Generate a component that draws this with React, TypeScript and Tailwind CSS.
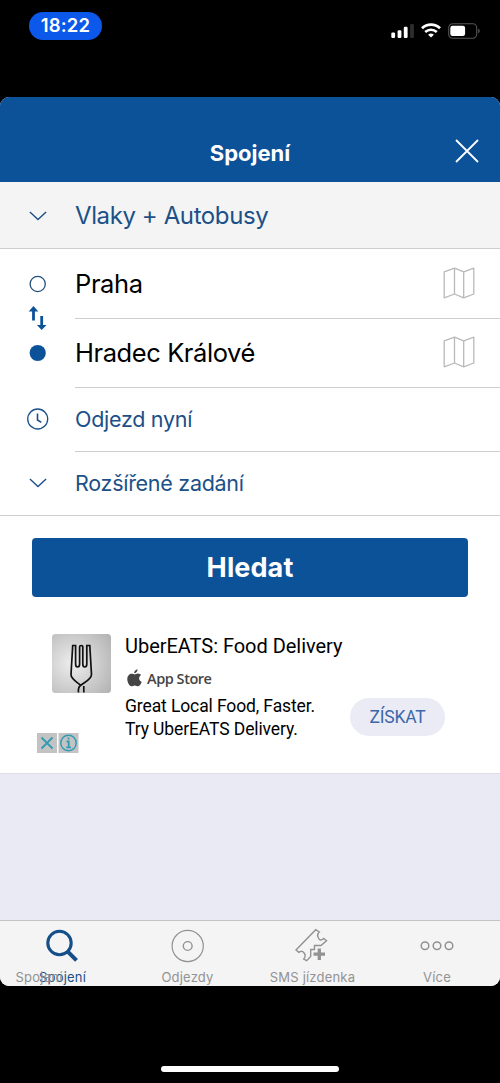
import React from 'react';

const StatusBar: React.FC = () => (
  <div className="h-[97px] shrink-0 flex items-start justify-between pl-[29px] pr-[20px] pt-3">
    <div className="w-[73px] h-[28px] rounded-full bg-[#0b58ea] flex items-center justify-center text-white text-[18.5px] font-semibold tracking-[0.2px]">
      18:22
    </div>
    <svg className="mt-[10px]" width="90" height="18" viewBox="0 0 90 18" fill="none">
      <rect x="1.3" y="10.6" width="3.8" height="5.4" rx="1.2" fill="#fff" />
      <rect x="7.6" y="8.2" width="3.8" height="7.8" rx="1.2" fill="#fff" />
      <rect x="13.8" y="4.8" width="3.8" height="11.2" rx="1.2" fill="#fff" />
      <rect x="20.1" y="2" width="3.8" height="14" rx="1.2" fill="#2d2d2d" />
      <path d="M32 6.2A13.2 13.2 0 0 1 50 6.2" stroke="#fff" strokeWidth="2.8" />
      <path d="M35.2 10A8.6 8.6 0 0 1 46.8 10" stroke="#fff" strokeWidth="2.5" />
      <path d="M41 15.6L38.1 12.7A4.4 4.4 0 0 1 43.9 12.7Z" fill="#fff" />
      <rect x="58.7" y="1.8" width="28" height="14.4" rx="4" stroke="#555" strokeWidth="1.1" />
      <rect x="60.3" y="3.8" width="14.8" height="10.2" rx="2.2" fill="#fff" />
      <path d="M88.2 6.6C90.2 7.6 90.2 10.4 88.2 11.4Z" fill="#555" />
    </svg>
  </div>
);

const ChevronIcon = () => (
  <svg width="18" height="10" viewBox="0 0 18 10" fill="none" stroke="#1b5088" strokeWidth="1.4">
    <path d="M.9.9L9 8.6L17.1.9" />
  </svg>
);

const MapIcon = () => (
  <svg className="mb-[2px]" width="32" height="32" viewBox="0 0 32 32" fill="none" stroke="#b9b9b9" strokeWidth="1.3" strokeLinejoin="round">
    <path d="M1.2 4.8L11.5 1.2L20.7 4.8L30.8 1.2V27L20.7 30.8L11.5 27L1.2 30.8Z" />
    <path d="M11.5 1.2V27M20.7 4.8V30.8" />
  </svg>
);

const SearchForm: React.FC = () => (
  <div>
    <div className="h-[67px] bg-[#f4f4f4] border-b border-[#cecece] flex items-center text-[#1b5088] pt-[2px]">
      <div className="w-[75px] flex justify-center"><ChevronIcon /></div>
      <span className="text-[24px] tracking-[-0.4px]">Vlaky + Autobusy</span>
    </div>

    <div className="flex border-b border-[#cecece]">
      <div className="w-[75px] shrink-0 flex flex-col items-center">
        <svg className="mt-[25px]" width="22" height="92" viewBox="0 0 22 92">
          <circle cx="10.7" cy="10" r="7.6" fill="none" stroke="#234f7b" strokeWidth="1.3" />
          <g stroke="#0c5299" strokeWidth="2.8">
            <path d="M6.5 35V46.5M14.7 42V53" />
          </g>
          <path d="M6.5 32L11.3 37.5H1.7ZM14.7 56L19.5 51H9.9Z" fill="#0c5299" />
          <circle cx="10.7" cy="79" r="8.1" fill="#0c5299" />
        </svg>
        <svg className="mt-[42px]" width="22" height="22" viewBox="0 0 22 22" fill="none" stroke="#1b5088" strokeWidth="1.3">
          <circle cx="10.7" cy="11" r="10" />
          <path d="M10.5 5.4V12L14.3 14.4" strokeWidth="1.6" />
        </svg>
        <div className="mt-[48px]"><ChevronIcon /></div>
      </div>
      <div className="flex-1">
        <div className="h-[70px] border-b border-[#cecece] flex items-center justify-between pr-[25px] text-[25.5px] tracking-[-0.4px] text-black">
          <span className="pt-[2px]">Praha</span>
          <MapIcon />
        </div>
        <div className="h-[69px] border-b border-[#cecece] flex items-center justify-between pr-[25px] text-[25.5px] tracking-[-0.42px] text-black">
          <span>Hradec Králové</span>
          <MapIcon />
        </div>
        <div className="h-[64px] border-b border-[#cecece] flex items-center text-[21.5px] tracking-[-0.28px] text-[#1b5088]">Odjezd nyní</div>
        <div className="h-[63px] flex items-center text-[21.5px] tracking-[-0.28px] text-[#1b5088]">Rozšířené zadání</div>
      </div>
    </div>

    <div className="px-8 pt-[22px]">
      <button className="w-full h-[59px] rounded-[4px] bg-[#0c5299] text-white text-[27px] font-bold tracking-[0.1px] pt-px">
        Hledat
      </button>
    </div>
  </div>
);

const AdBanner: React.FC = () => (
  <div className="font-['Roboto',sans-serif] h-[177px] pt-[22px] px-[37px] border-b border-[#dedee4] text-black">
    <div className="h-[134px] flex relative">
      <svg className="ml-[15px] mt-[15px]" width="59" height="59" viewBox="0 0 59 59" fill="none">
        <defs>
          <radialGradient id="tile" cx=".35" cy=".5" r=".8">
            <stop offset="0" stopColor="#eeeeee" />
            <stop offset="1" stopColor="#b2b2b2" />
          </radialGradient>
        </defs>
        <rect width="59" height="59" rx="3.5" fill="url(#tile)" />
        <path
          d="M28.8 51.3C24 47.5 19 45 19 40.5L20.7 11.5H23.6V30C23.6 34 27.6 34 27.6 30V13Q27.6 11.5 29.2 11.5T30.8 13V30C30.8 34 34.8 34 34.8 30V11.5H37.8L39.5 40.5C39.5 45 34 47.5 28.8 51.3C27 52.5 26 55 26.5 58.5M31.8 52V58.5"
          stroke="#111"
          strokeWidth="1.7"
        />
      </svg>
      <div className="ml-[14px] pt-[15px] whitespace-nowrap">
        <div className="text-[20px] leading-[24px] tracking-[-0.03px]">UberEATS: Food Delivery</div>
        <div className="h-[37px] flex items-center pt-1 gap-[5px]">
          <svg className="ml-[2px] mb-[2px]" width="15" height="18" viewBox="0 0 15 18" fill="#454545">
            <path d="M10.5.2C10.7 2.4 9 4.3 7.2 4.3C7 2.2 8.6.5 10.5.2ZM7.6 5.4C8.4 5.4 9.5 4.5 10.9 4.5C12.4 4.5 13.5 5.3 14.1 6.1C11.2 7.8 11.7 11.8 14.7 13C14.1 14.5 12.8 17.2 11.1 17.2C9.8 17.2 9.3 16.4 7.7 16.4C6.1 16.4 5.6 17.2 4.4 17.2C2.2 17.2.3 13.2.3 10.1C.3 6.6 2.6 4.7 4.7 4.7C6.1 4.7 6.9 5.4 7.6 5.4Z" />
          </svg>
          <span className="font-['Open_Sans',sans-serif] font-semibold text-[14.5px] text-[#454545] tracking-[-0.45px]">App Store</span>
        </div>
        <div className="text-[17.5px] leading-[22.5px] tracking-[-0.11px]">Great Local Food, Faster.<br />Try UberEATS Delivery.</div>
      </div>
      <button className="absolute right-[18px] top-[79px] w-[95px] h-[38px] rounded-full bg-[#ebebf5] text-[#3b68ab] text-[17.5px] tracking-[-0.2px]">
        ZÍSKAT
      </button>
      <svg className="absolute left-0 bottom-0" width="42" height="20" viewBox="0 0 42 20" fill="none" stroke="#329bb3" strokeWidth="1.8">
        <path d="M0 0H20V20H0ZM21.5 0H41.5V20H21.5Z" fill="#c3c3c3" stroke="none" />
        <path d="M4.5 4.5L15.5 15.5M15.5 4.5L4.5 15.5" />
        <circle cx="31.5" cy="10" r="7.7" strokeWidth="1.5" />
        <path d="M29.5 8.5H31.7V14M29.3 14.3H34M31.5 4.5V6.6" />
      </svg>
    </div>
  </div>
);

const TabBar: React.FC = () => (
  <div className="h-[66px] grid grid-cols-4 bg-[#f4f4f4] border-t border-[#c3c3c8] text-[13px] leading-[16px] tracking-[0.2px] text-[#929292]">
    <div className="flex flex-col items-center relative text-[#1b5088]">
      <svg className="mt-[8px] mr-[2px]" width="34" height="34" viewBox="0 0 34 34" fill="none" stroke="#154e88">
        <circle cx="14.5" cy="14" r="11.7" strokeWidth="3.1" />
        <path d="M22.5 22.3L31.5 31.3" strokeWidth="4" />
      </svg>
      <span className="mt-[6px]">Spojení</span>
      <span className="absolute left-[15.5px] top-[48px] text-[#929292]">Spojení</span>
    </div>
    <div className="flex flex-col items-center">
      <svg className="mt-[8px]" width="34" height="34" viewBox="0 0 34 34" fill="none" stroke="#929292" strokeWidth="1.2">
        <circle cx="16.7" cy="17" r="15.6" />
        <circle cx="16.7" cy="17" r="4.4" strokeWidth="1.4" />
      </svg>
      <span className="mt-[6px]">Odjezdy</span>
    </div>
    <div className="flex flex-col items-center">
      <svg className="mt-[7px] mr-[2px]" width="35" height="35" viewBox="0 0 35 35" fill="none" stroke="#929292" strokeWidth="1.4">
        <path d="M21.7 1.7L25.3 4Q22.8 6 24 9T26.3 12Q28.2 11.8 29.7 10.5L32.5 12.7L27 17.5H20.5V21.5H16.7V28.5L12.7 32.7L9.7 31Q12.2 28 10.5 25.5T7.7 23.2Q6 23.4 4.8 24.4L2 22Z" />
        <path d="M25.3 20.5V32M19.5 26.2H31" strokeWidth="3.3" />
      </svg>
      <span className="mt-[6px]">SMS jízdenka</span>
    </div>
    <div className="flex flex-col items-center">
      <svg className="mt-[8px] mr-px" width="34" height="34" viewBox="0 0 34 34" fill="none" stroke="#929292" strokeWidth="1.5">
        <circle cx="5" cy="16.7" r="3.8" />
        <circle cx="17" cy="16.7" r="3.8" />
        <circle cx="29" cy="16.7" r="3.8" />
      </svg>
      <span className="mt-[6px] mr-px">Více</span>
    </div>
  </div>
);

const App: React.FC = () => {
  return (
    <div className="w-[500px] h-[1083px] bg-black flex flex-col overflow-hidden font-['Inter',sans-serif]">
      <StatusBar />
      <div className="h-[889px] shrink-0 rounded-[9px] overflow-hidden bg-[#eaeaf4] flex flex-col">
        <div className="h-[85px] shrink-0 bg-[#0c5299] grid grid-cols-3 items-center px-[21px] pt-[26px] text-white">
          <h1 className="col-start-2 text-center text-[22px] font-bold pt-px">Spojení</h1>
          <svg className="justify-self-end mb-[3px]" width="24" height="24" viewBox="0 0 24 24" fill="none" stroke="#fff" strokeWidth="1.8">
            <path d="M1 1L23 23M23 1L1 23" />
          </svg>
        </div>
        <div className="bg-white">
          <SearchForm />
          <AdBanner />
        </div>
        <div className="mt-auto"><TabBar /></div>
      </div>
      <div className="mt-[80px] mx-auto w-[178px] h-[6px] rounded-full bg-white" />
    </div>
  );
};

export default App;
